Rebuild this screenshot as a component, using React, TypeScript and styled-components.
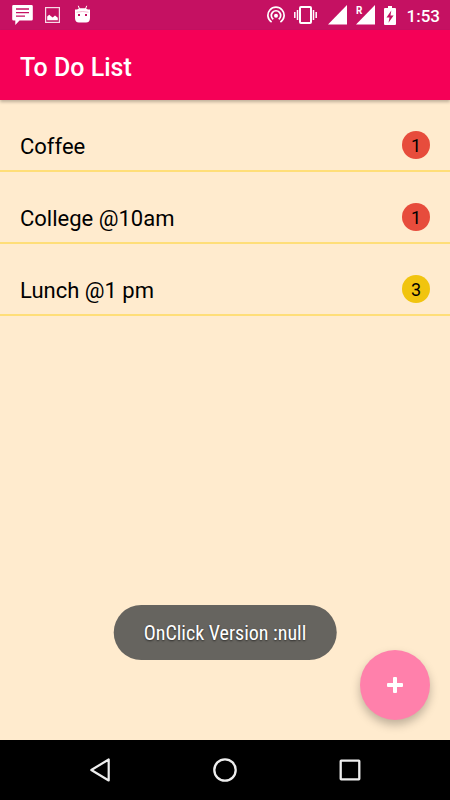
import React from 'react'
import styled, { createGlobalStyle } from 'styled-components'

const GlobalStyle = createGlobalStyle`
    * {
        box-sizing: border-box;
    }
    body {
        margin: 0;
        font-family: Roboto, "Liberation Sans", sans-serif;
        background: #ffebce;
    }
`

const Page = styled.div`
    min-height: 100vh;
    display: flex;
    flex-direction: column;
    background: #ffebce;
`

const StatusBar = styled.div`
    height: 30px;
    padding: 0 10px 0 12px;
    display: flex;
    align-items: center;
    justify-content: space-between;
    background: #c51162;
    color: #fff;
`

const StatusGroup = styled.div<{ $gap: number }>`
    display: flex;
    align-items: center;
    gap: ${({ $gap }) => $gap}px;

    svg {
        display: block;
    }
`

const Clock = styled.time`
    padding: 2px 0 0 1px;
    font-size: 17px;
    font-weight: 500;
    line-height: 28px;
`

const AppBar = styled.header`
    height: 70px;
    padding: 6px 20px 0;
    display: flex;
    align-items: center;
    background: #f50057;
    box-shadow: 0 2px 3px rgba(0, 0, 0, 0.25);
`

const Title = styled.h1`
    margin: 0;
    font-size: 25px;
    font-weight: 500;
    line-height: 32px;
    color: #fff;
`

const Content = styled.main`
    flex: 1;
    position: relative;
`

const TodoList = styled.ul`
    margin: 0;
    padding: 0;
    list-style: none;
`

const TodoItem = styled.li`
    height: 72px;
    padding: 24px 20px 0;
    display: flex;
    align-items: center;
    justify-content: space-between;
    border-bottom: 2px solid #ffde78;
`

const TodoText = styled.span`
    font-size: 22px;
    line-height: 32px;
    color: #000;
`

const Badge = styled.span<{ $color: string }>`
    width: 28px;
    height: 28px;
    margin-bottom: 4px;
    border-radius: 50%;
    font-size: 18px;
    line-height: 29px;
    text-align: center;
    color: #000;
    background: ${({ $color }) => $color};
`

const Toast = styled.div`
    position: absolute;
    left: 50%;
    bottom: 80px;
    transform: translateX(-50%);
    padding: 1px 30px 0;
    border-radius: 28px;
    font-family: "Roboto Condensed", Roboto, "Liberation Sans", sans-serif;
    font-size: 20px;
    line-height: 54px;
    white-space: nowrap;
    color: #fff;
    background: #66645f;
    text-shadow: 0 1px 2px rgba(0, 0, 0, 0.6);
`

const AddButton = styled.button`
    position: absolute;
    right: 20px;
    bottom: 20px;
    width: 70px;
    height: 70px;
    padding: 0;
    display: flex;
    align-items: center;
    justify-content: center;
    border: 0;
    border-radius: 50%;
    background: #ff80ab;
    box-shadow: 0 5px 10px rgba(0, 0, 0, 0.25);
`

const NavBar = styled.nav`
    height: 60px;
    display: flex;
    align-items: center;
    justify-content: center;
    gap: 77px;
    background: #000;
`

const NavButton = styled.button`
    width: 48px;
    height: 48px;
    padding: 0;
    display: flex;
    align-items: center;
    justify-content: center;
    border: 0;
    background: none;
    color: #eee;
`

const MessageIcon = () => (
    <svg width="21" height="20" viewBox="0 0 21 20">
        <path d="M1.5 0h18a1.3 1.3 0 0 1 1.3 1.3v13a1.3 1.3 0 0 1-1.3 1.3H7.5L3.3 20v-4.4H1.5A1.3 1.3 0 0 1 .2 14.3V1.3A1.3 1.3 0 0 1 1.5 0z" fill="#fff" />
        <path d="M4 4h13M4 7.6h13M4 11.2h9" stroke="#c51162" strokeWidth="1.3" />
    </svg>
)

const PictureIcon = () => (
    <svg width="16" height="16" viewBox="0 0 16 16">
        <rect x="0.6" y="0.6" width="13.8" height="14.8" fill="none" stroke="#fff" strokeWidth="1.2" opacity="0.85" />
        <path d="M2.2 13.2V9.5l2-1.8 1.8 1.5 1.7 1.2 2.3-2 2.8 2.4v2.4z" fill="#fff" />
    </svg>
)

const DroidIcon = () => (
    <svg width="18" height="20" viewBox="-2 0 18 20">
        <path d="M4.5 4L3.3.8M10.5 4L11.7.8" stroke="#fff" strokeWidth="1" />
        <path d="M0 4.5h2L4.5 3.2h6L13 4.5h2V13c0 3-1.5 4.5-4 4.5H4c-2.5 0-4-1.5-4-4.5z" fill="#fff" />
        <path d="M1.5 7.2Q7.5 5.8 13.5 7.2" fill="none" stroke="#f09abb" strokeWidth="0.7" />
        <rect x="3" y="9" width="2" height="2" fill="#c51162" />
        <rect x="10" y="9" width="2" height="2" fill="#c51162" />
    </svg>
)

const HotspotIcon = () => (
    <svg width="18" height="18" viewBox="0 0 18 18" fill="none" stroke="#fff" strokeWidth="1.7">
        <path d="M4.6 16.1A8.1 8.1 0 1 1 13.4 16.1" />
        <path d="M6.3 13.3A4.7 4.7 0 1 1 11.7 13.3" />
        <circle cx="9" cy="9.8" r="2" fill="#fff" stroke="none" />
    </svg>
)

const VibrateIcon = () => (
    <svg width="25" height="18" viewBox="0 0 25 18" fill="none" stroke="#fff">
        <rect x="6" y="1" width="11" height="16" rx="1" strokeWidth="2" />
        <path d="M3.5 4v10M19.5 4v10M.8 6v6M22.2 6v6" strokeWidth="1.5" />
    </svg>
)

const SignalIcon = () => (
    <svg width="19" height="20" viewBox="0 0 19 20">
        <path d="M19 0v19.5H0z" fill="#fff" />
    </svg>
)

const RoamingIcon = () => (
    <svg width="19" height="20" viewBox="0 0 19 20">
        <path d="M19 0v19.5H0z" fill="#fff" />
        <path d="M0 0h8v11H0z" fill="#c51162" />
        <text x="0" y="9" fill="#fff" fontSize="10" fontWeight="700">R</text>
    </svg>
)

const BatteryIcon = () => (
    <svg width="13" height="19" viewBox="0 0 13 19">
        <path d="M4 0h4v2h3a1 1 0 0 1 1 1v15a1 1 0 0 1-1 1H1a1 1 0 0 1-1-1V3a1 1 0 0 1 1-1h3z" fill="#fff" />
        <path d="M7.3 4.5L2.5 11.5h3l-1 5.2L9.6 9.6H6.5z" fill="#c51162" />
    </svg>
)

const todos = [
    { text: 'Coffee', priority: 1, color: '#e74c3c' },
    { text: 'College @10am', priority: 1, color: '#e74c3c' },
    { text: 'Lunch @1 pm', priority: 3, color: '#f1c40f' },
]

export default function App() {
    return (
        <Page>
            <GlobalStyle />
            <StatusBar>
                <StatusGroup $gap={12}>
                    <MessageIcon />
                    <PictureIcon />
                    <DroidIcon />
                </StatusGroup>
                <StatusGroup $gap={9}>
                    <HotspotIcon />
                    <VibrateIcon />
                    <SignalIcon />
                    <RoamingIcon />
                    <BatteryIcon />
                    <Clock>1:53</Clock>
                </StatusGroup>
            </StatusBar>
            <AppBar>
                <Title>To Do List</Title>
            </AppBar>
            <Content>
                <TodoList>
                    {todos.map(todo => (
                        <TodoItem key={todo.text}>
                            <TodoText>{todo.text}</TodoText>
                            <Badge $color={todo.color}>{todo.priority}</Badge>
                        </TodoItem>
                    ))}
                </TodoList>
                <Toast role="status">OnClick Version :null</Toast>
                <AddButton type="button" aria-label="Add">
                    <svg width="18" height="18" viewBox="0 0 18 18" fill="#fff">
                        <rect x="7" y="1" width="4" height="16" rx="1" />
                        <rect x="1" y="7" width="16" height="4" rx="1" />
                    </svg>
                </AddButton>
            </Content>
            <NavBar>
                <NavButton type="button" aria-label="Back">
                    <svg width="20" height="24" viewBox="0 0 20 24">
                        <path d="M18.7 1.5v21L1.3 12z" fill="none" stroke="currentColor" strokeWidth="2.2" strokeLinejoin="round" />
                    </svg>
                </NavButton>
                <NavButton type="button" aria-label="Home">
                    <svg width="24" height="24" viewBox="0 0 24 24">
                        <circle cx="12" cy="12" r="10.7" fill="none" stroke="currentColor" strokeWidth="2.3" />
                    </svg>
                </NavButton>
                <NavButton type="button" aria-label="Recent apps">
                    <svg width="22" height="22" viewBox="0 0 22 22">
                        <rect x="1.7" y="1.7" width="18.6" height="18.6" rx="0.5" fill="none" stroke="currentColor" strokeWidth="2.3" />
                    </svg>
                </NavButton>
            </NavBar>
        </Page>
    )
}
